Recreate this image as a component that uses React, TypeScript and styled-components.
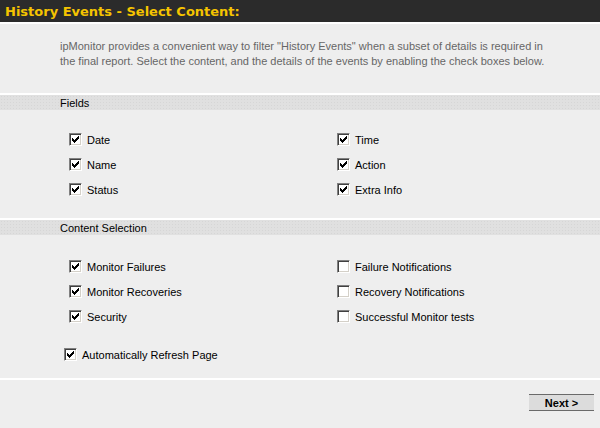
import React, { useState } from "react";
import styled, { createGlobalStyle } from "styled-components";

const Global = createGlobalStyle`
  html, body { margin: 0; padding: 0; background: #eeeeee; }
  body { font-family: "Liberation Sans", Arial, sans-serif; font-size: 11px; color: #000; }
`;

const Page = styled.div`
  width: 600px;
  height: 428px;
  background: #eeeeee;
  display: flex;
  flex-direction: column;
`;

const Header = styled.div`
  height: 22px;
  background: #2b2b2b;
  border-bottom: 2px solid #ffffff;
  display: flex;
  align-items: center;
  padding-left: 5px;
  color: #f5c400;
  font-weight: bold;
  font-size: 13px;
  font-family: "DejaVu Sans", Verdana, sans-serif;
`;

const Intro = styled.p`
  margin: 0;
  padding: 15px 50px 0 60px;
  height: 54px;
  line-height: 15px;
  color: #666666;
  font-size: 11px;
`;

const SectionBar = styled.div`
  border-top: 2px solid #ffffff;
  height: 15px;
  line-height: 16px;
  padding-left: 60px;
  background-color: #e0e0e0;
  background-image: radial-gradient(#d6d6d6 0.6px, transparent 0.8px);
  background-size: 3px 3px;
  color: #000;
  font-size: 11px;
`;

const Grid = styled.div<{ $top: number; $bottom: number }>`
  display: grid;
  grid-template-columns: 268px auto;
  grid-auto-rows: 25px;
  padding: ${(p) => p.$top}px 0 ${(p) => p.$bottom}px 69px;
`;

const Row = styled.label`
  display: flex;
  align-items: center;
  gap: 5px;
  cursor: default;
`;

const Box = styled.span<{ $on: boolean }>`
  width: 11px;
  height: 11px;
  background: #ffffff;
  border-top: 1px solid #808080;
  border-left: 1px solid #808080;
  border-bottom: 1px solid #ffffff;
  border-right: 1px solid #ffffff;
  box-shadow: inset 1px 1px 0 #404040, inset -1px -1px 0 #d4d0c8;
  display: flex;
  align-items: center;
  justify-content: center;
  flex-shrink: 0;
`;

const Label = styled.span``;

const Extra = styled.div`
  padding: 13px 0 11px 64px;
  height: 25px;
  display: flex;
`;

const Footer = styled.div`
  border-top: 2px solid #ffffff;
  display: flex;
  justify-content: flex-end;
  padding: 14px 6px 0 0;
`;

const Button = styled.button`
  width: 65px;
  height: 17px;
  padding: 0;
  border: none;
  border-top: 1px solid #6a6a6a;
  border-bottom: 1px solid #6a6a6a;
  background: #dcdcdc;
  font-family: "Liberation Sans", Arial, sans-serif;
  font-weight: bold;
  font-size: 11px;
  color: #000;
  cursor: pointer;
`;

const Check = () => (
  <svg width="7" height="7" viewBox="0 0 7 7" shapeRendering="crispEdges">
    <path
      d="M6 0h1v1h-1zM5 1h2v1h-2zM0 2h1v1h-1zM4 2h3v1h-3zM0 3h2v1h-2zM3 3h3v1h-3zM0 4h5v1h-5zM1 5h3v1h-3zM2 6h1v1h-1z"
      fill="#000"
    />
  </svg>
);

function CheckItem({ label, initial }: { label: string; initial: boolean }) {
  const [on, setOn] = useState(initial);
  return (
    <Row onClick={() => setOn(!on)}>
      <Box $on={on}>{on && <Check />}</Box>
      <Label>{label}</Label>
    </Row>
  );
}

export default function App() {
  return (
    <Page>
      <Global />
      <Header>History Events - Select Content:</Header>
      <Intro>
        ipMonitor provides a convenient way to filter "History Events" when a subset of details is required in
        the final report. Select the content, and the details of the events by enabling the check boxes below.
      </Intro>
      <SectionBar>Fields</SectionBar>
      <Grid $top={17} $bottom={16}>
        <CheckItem label="Date" initial />
        <CheckItem label="Time" initial />
        <CheckItem label="Name" initial />
        <CheckItem label="Action" initial />
        <CheckItem label="Status" initial />
        <CheckItem label="Extra Info" initial />
      </Grid>
      <SectionBar>Content Selection</SectionBar>
      <Grid $top={19} $bottom={0}>
        <CheckItem label="Monitor Failures" initial />
        <CheckItem label="Failure Notifications" initial={false} />
        <CheckItem label="Monitor Recoveries" initial />
        <CheckItem label="Recovery Notifications" initial={false} />
        <CheckItem label="Security" initial />
        <CheckItem label="Successful Monitor tests" initial={false} />
      </Grid>
      <Extra>
        <CheckItem label="Automatically Refresh Page" initial />
      </Extra>
      <Footer>
        <Button>Next &gt;</Button>
      </Footer>
    </Page>
  );
}
